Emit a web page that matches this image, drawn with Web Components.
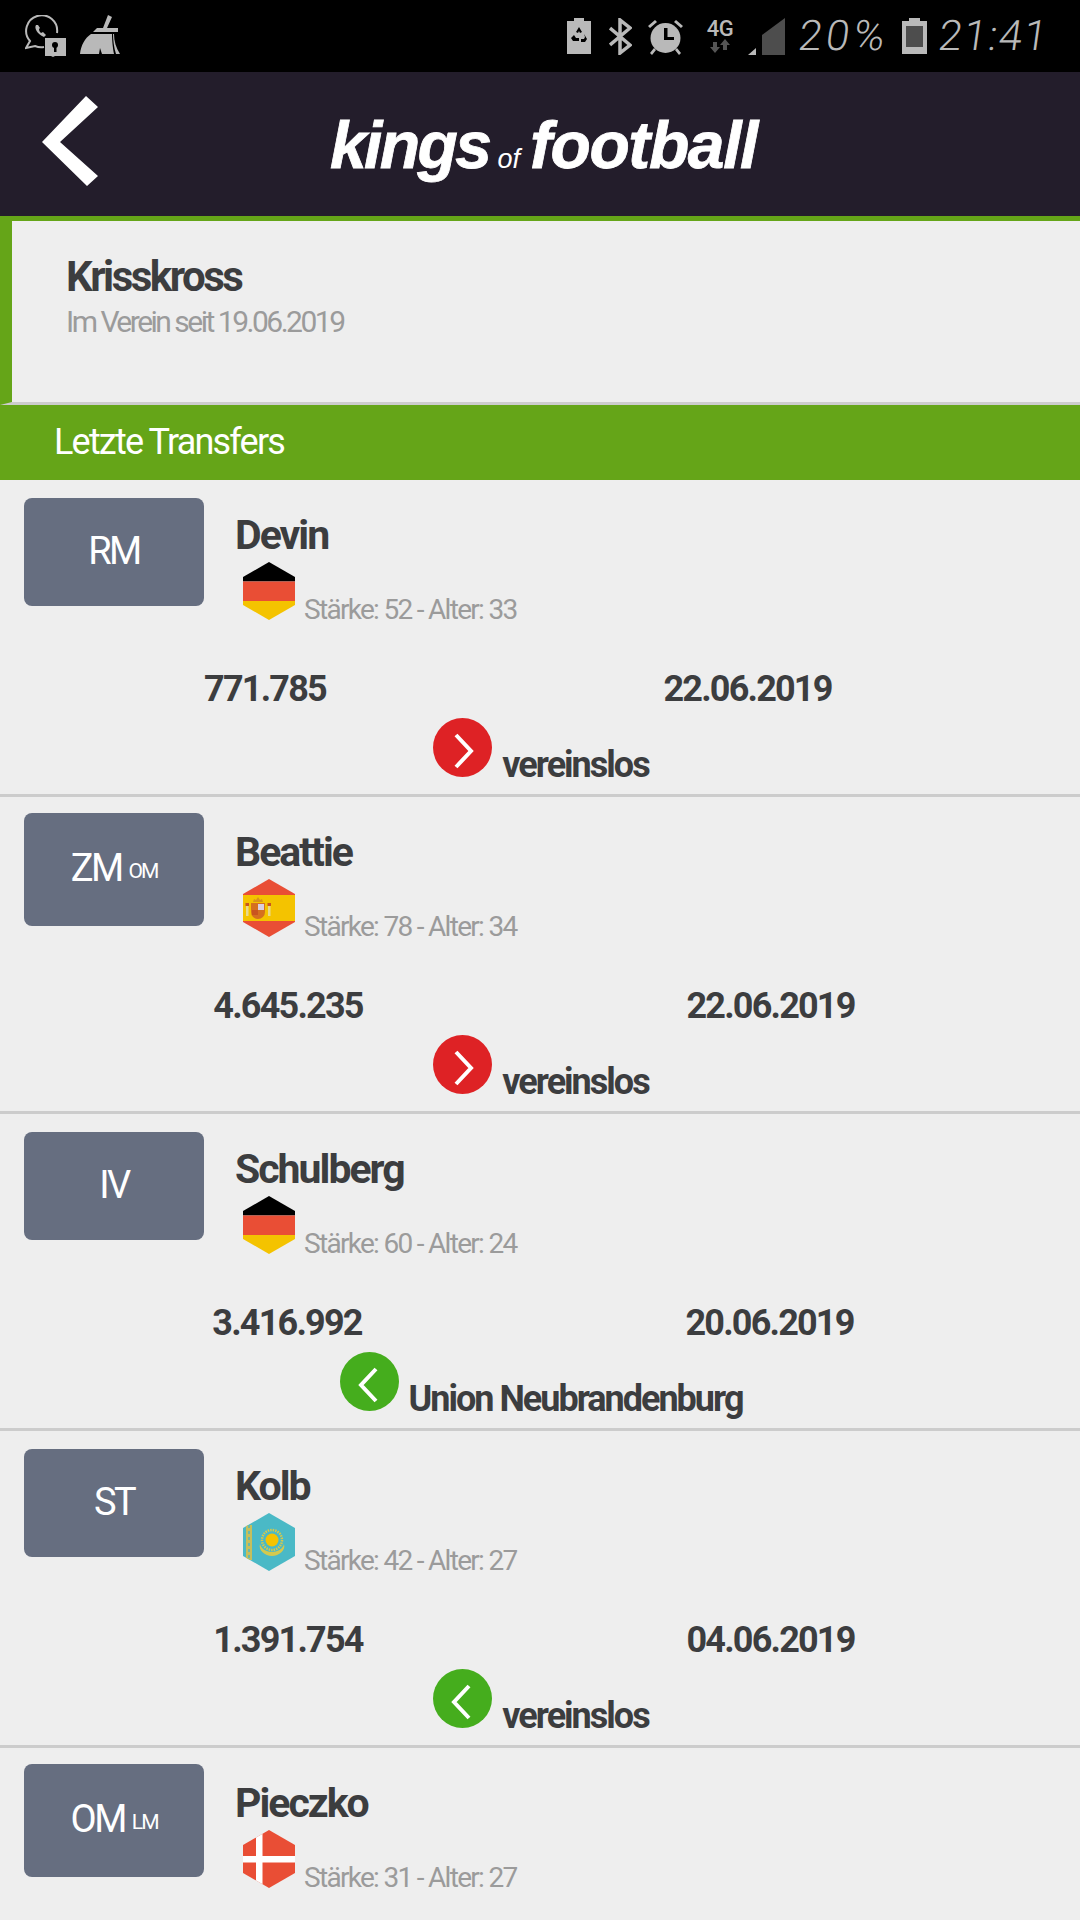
<!DOCTYPE html>
<html lang="de">
<head>
<meta charset="utf-8">
<title>Kings of Football</title>
<style>
  html, body { margin: 0; padding: 0; background: #eee; }
  body { width: 1080px; height: 1920px; overflow: hidden; font-family: Roboto, "Liberation Sans", sans-serif; }
</style>
</head>
<body>
<status-bar></status-bar>
<app-header></app-header>
<club-card name="Krisskross">Im Verein seit 19.06.2019</club-card>
<section-title>Letzte Transfers</section-title>
<transfer-item pos="RM" name="Devin" flag="de" strength="52" age="33" amount="771.785" date="22.06.2019" split="530" dir="out" club="vereinslos"></transfer-item>
<transfer-item pos="ZM" alt="OM" name="Beattie" flag="es" strength="78" age="34" amount="4.645.235" date="22.06.2019" split="576" dir="out" club="vereinslos"></transfer-item>
<transfer-item pos="IV" name="Schulberg" flag="de" strength="60" age="24" amount="3.416.992" date="20.06.2019" split="574" dir="in" club="Union Neubrandenburg"></transfer-item>
<transfer-item pos="ST" name="Kolb" flag="kz" strength="42" age="27" amount="1.391.754" date="04.06.2019" split="576" dir="in" club="vereinslos"></transfer-item>
<transfer-item pos="OM" alt="LM" name="Pieczko" flag="dk" strength="31" age="27" partial></transfer-item>

<script>
const HEX = '26,0 52,15 52,43 26,58 0,43 0,15';

const FLAGS = {
    de: `<rect width="52" height="19.5" fill="#000"/>
         <rect y="19.5" width="52" height="19.5" fill="#e94e35"/>
         <rect y="39" width="52" height="19" fill="#f4c300"/>`,
    es: `<rect width="52" height="58" fill="#e94e35"/>
         <rect y="16" width="52" height="26" fill="#f4c300"/>
         <path d="M8 24h14v9a7 7 0 0 1-14 0z" fill="#d5701f"/>
         <rect x="15" y="25" width="6" height="6" fill="#d9cfe0"/>
         <rect x="9" y="31" width="6" height="5" fill="#c9551f"/>
         <path d="M10 23l1-3 2 1 2-3 2 3 2-1 1 3z" fill="#d9941a"/>
         <rect x="3" y="27" width="2.500" height="10" fill="#e8d98e"/>
         <rect x="25" y="27" width="2.500" height="10" fill="#e8d98e"/>
         <rect x="2.500" y="24" width="3.500" height="3" fill="#c9551f"/>
         <rect x="24.500" y="24" width="3.500" height="3" fill="#c9551f"/>`,
    kz: `<rect width="52" height="58" fill="#4ab9c6"/>
         <rect x="3" y="12" width="6" height="35" fill="#c5bf5c"/>
         <path d="M6 12v35" stroke="#4ab9c6" stroke-width="1.500" stroke-dasharray="3 3"/>
         <circle cx="29" cy="27" r="10" fill="none" stroke="#d4c94e" stroke-width="2.500" stroke-dasharray="1.500 1"/>
         <circle cx="29" cy="27" r="6.500" fill="#f4c300"/>
         <path d="M17 31c-2 6 5 12 12 12s14-6 12-12c-1 5-7 8-12 8s-11-3-12-8z" fill="#d4c94e"/>`,
    dk: `<rect width="52" height="58" fill="#e94e35"/>
         <rect x="13" width="6.500" height="58" fill="#fff"/>
         <rect y="26" width="52" height="6.500" fill="#fff"/>`
};

class StatusBar extends HTMLElement {
    constructor() {
        super();
        this.attachShadow({ mode: 'open' });
        this.shadowRoot.appendChild(StatusBar.template.content.cloneNode(true));
    }
}
StatusBar.template = document.createElement('template');
StatusBar.template.innerHTML = `
<style>
  :host { display: flex; align-items: center; height: 72px; padding: 0 38px 0 25px; box-sizing: border-box;
          background: #000; color: #b9b9b9; }
  svg { display: block; flex: none; }
  .left { display: flex; gap: 14px; }
  .right { display: flex; align-items: center; margin-left: auto; }
  .hand { font: 300 42px/1 Roboto, sans-serif; transform: skewX(-8deg); white-space: nowrap; }
  .pct { margin: 0 14px; width: 89px; letter-spacing: 4px; }
  .time { margin-left: 12px; width: 103px; letter-spacing: 1.500px; }
  .net { display: flex; flex-direction: column; align-items: center; width: 28px; margin-left: 23px; }
  .net span { font: 500 22px/20px Roboto, sans-serif; letter-spacing: -0.500px; }
</style>
<div class="left">
  <svg width="41" height="42" viewBox="0 0 41 42">
    <path d="M32 18A15.500 15.500 0 1 0 5 26L1 33l9-2a16 16 0 0 0 9 1" fill="none" stroke="currentColor" stroke-width="2"/>
    <path d="M11 10c-2 3 1 9 8 12l2-2-3-3-2 1c-1-1-2-2-2-4l1-1-2-3z" fill="currentColor"/>
    <path d="M20 23h21v18H30l-2 1-2-1h-6z" fill="currentColor"/>
    <circle cx="30" cy="30" r="3" fill="#000"/><rect x="29" y="31" width="2.500" height="6" fill="#000"/>
  </svg>
  <svg width="40" height="40" viewBox="0 0 40 40">
    <path d="M28 0l4 2-5 11h11v4H13l4-4h6z" fill="currentColor"/>
    <path d="M11 19h21c0 7 1 15 2 20H22l-2-6-1 6H0c1-9 5-16 11-20z" fill="currentColor"/>
    <path d="M34 19c0 7 2 14 6 20h-4c-2-6-3-14-3-20z" fill="currentColor"/>
  </svg>
</div>
<div class="right">
  <svg width="24" height="36" viewBox="0 0 24 36">
    <path d="M7 0h10v3h7v33H0V3h7z" fill="currentColor"/>
    <path d="M12 9l3 5-2 1-1-2-1 2-2-1zM7 17l2 3h3v3H6l-2-3zM17 16l3 5-2 3h-4v-3h3l1-2z" fill="#000"/>
  </svg>
  <svg style="margin-left:18px" width="23" height="37" viewBox="0 0 23 37">
    <path d="M1 10l20 17-10 8V2l10 8L1 27" fill="none" stroke="currentColor" stroke-width="3.500"/>
  </svg>
  <svg style="margin-left:16px" width="35" height="37" viewBox="0 0 35 37">
    <circle cx="17.500" cy="20" r="15" fill="currentColor"/>
    <path d="M0 8l7-6 2 2-7 6zM35 8l-7-6-2 2 7 6zM2 35l4-5 2 2-4 5zM33 35l-4-5-2 2 4 5z" fill="currentColor"/>
    <path d="M16 10h3.500v9H26v3H16z" fill="#000"/>
  </svg>
  <div class="net">
    <span>4G</span>
    <svg width="22" height="14" viewBox="0 0 22 14"><path d="M6 14L1 8h3V3h4v5h3zM16 0l5 6h-3v5h-4V6h-3z" fill="#555"/></svg>
  </div>
  <svg style="margin-left:14px" width="37" height="37" viewBox="0 0 37 37">
    <path d="M37 0v37H14V17z" fill="#4d4d4d"/>
    <path d="M0 37l8-7v7z" fill="#b9b9b9"/>
  </svg>
  <span class="hand pct">20%</span>
  <svg width="25" height="36" viewBox="0 0 25 36">
    <path d="M7 0h11v3h7v33H0V3h7z" fill="currentColor"/>
    <rect x="4" y="8" width="17" height="21" fill="#4d4d4d"/>
  </svg>
  <span class="hand time">21:41</span>
</div>`;
customElements.define('status-bar', StatusBar);

class AppHeader extends HTMLElement {
    constructor() {
        super();
        this.attachShadow({ mode: 'open' });
        this.shadowRoot.appendChild(AppHeader.template.content.cloneNode(true));
    }
}
AppHeader.template = document.createElement('template');
AppHeader.template.innerHTML = `
<style>
  :host { display: flex; align-items: center; height: 149px; padding-left: 42px; box-sizing: border-box;
          background: #231d2b; border-bottom: 5px solid #65a518; }
  svg { display: block; flex: none; margin-bottom: 6px; }
  .logo { margin: 2px 0 0 232px; color: #fff; white-space: nowrap; font-family: "Liberation Sans", Arial, sans-serif;
          font-style: italic; line-height: 1; -webkit-text-stroke: 0.8px #fff; }
  .big { font-size: 66px; font-weight: 700; letter-spacing: -2.600px; }
  .of { font-size: 27px; margin: 0 10px 0 8px; -webkit-text-stroke: 0; }
  .big.last { letter-spacing: -1.400px; }
</style>
<svg width="56" height="90" viewBox="42 96 56 90"><polygon fill="#fff" points="86,96 98,107 60,142 98,176 87,186 42,142"/></svg>
<div class="logo"><span class="big">kings</span><span class="of">of</span><span class="big last">football</span></div>`;
customElements.define('app-header', AppHeader);

class ClubCard extends HTMLElement {
    constructor() {
        super();
        this.attachShadow({ mode: 'open' });
        this.shadowRoot.appendChild(ClubCard.template.content.cloneNode(true));
        this.shadowRoot.querySelector('.name').textContent = this.getAttribute('name');
    }
}
ClubCard.template = document.createElement('template');
ClubCard.template.innerHTML = `
<style>
  :host { display: block; height: 184px; padding: 33px 0 0 54px; box-sizing: border-box; background: #eee;
          border-left: 12px solid #65a518; border-bottom: 3px solid #ccc; }
  .name { font: 700 42px/46px Roboto, sans-serif; letter-spacing: -2.500px; color: #3c3d3f; }
  .sub { font: 400 30px/36px Roboto, sans-serif; letter-spacing: -2.500px; color: #9b9b9b; margin-top: 4px; }
</style>
<div class="name"></div>
<div class="sub"><slot></slot></div>`;
customElements.define('club-card', ClubCard);

class SectionTitle extends HTMLElement {
    constructor() {
        super();
        this.attachShadow({ mode: 'open' });
        this.shadowRoot.innerHTML = `
<style>
  :host { display: flex; align-items: center; height: 75px; box-sizing: border-box; padding: 0 0 2px 54px;
          background: #65a518; color: #fff; font: 400 36px/1 Roboto, sans-serif; letter-spacing: -1.800px; }
</style>
<slot></slot>`;
    }
}
customElements.define('section-title', SectionTitle);

class TransferItem extends HTMLElement {
    constructor() {
        super();
        this.attachShadow({ mode: 'open' });
        this.shadowRoot.appendChild(TransferItem.template.content.cloneNode(true));
    }

    connectedCallback() {
        const root = this.shadowRoot;
        const attr = name => this.getAttribute(name) || '';
        root.querySelector('.main').textContent = attr('pos');
        root.querySelector('.alt').textContent = attr('alt');
        root.querySelector('.pos').classList.toggle('double', this.hasAttribute('alt'));
        root.querySelector('.name').textContent = attr('name');
        root.querySelector('.stats').textContent = `Stärke: ${attr('strength')} - Alter: ${attr('age')}`;
        root.querySelector('.flag').innerHTML =
            `<defs><clipPath id="hex"><polygon points="${HEX}"/></clipPath></defs>` +
            `<g clip-path="url(#hex)">${FLAGS[attr('flag')]}</g>`;
        if (this.hasAttribute('partial')) {
            // cut off by the bottom of the screen, only the top part shows
            root.querySelector('.figures').remove();
            root.querySelector('.dest').remove();
            return;
        }
        root.querySelector('.amount').textContent = attr('amount');
        root.querySelector('.date').textContent = attr('date');
        root.querySelector('.figures').style.setProperty('--split', attr('split') + 'px');
        root.querySelector('.club').textContent = attr('club');
        const arrow = root.querySelector('.arrow');
        arrow.classList.add(attr('dir'));
        arrow.querySelector('polyline').setAttribute('points',
            attr('dir') === 'out' ? '23,17 38,33 23,49' : '36,17 21,33 36,49');
    }
}
TransferItem.template = document.createElement('template');
TransferItem.template.innerHTML = `
<style>
  :host { display: block; height: 317px; box-sizing: border-box; background: #eee; border-bottom: 3px solid #ccc;
          color: #3c3d3f; font-family: Roboto, sans-serif; }
  :host([partial]) { height: 172px; border-bottom: 0; }
  .top { display: flex; height: 144px; padding-left: 24px; gap: 31px; }
  .pos { align-self: center; display: flex; align-items: center; justify-content: center; gap: 7px;
         width: 180px; height: 108px; box-sizing: border-box; padding-bottom: 2px; border-radius: 8px;
         background: #666e80; color: #fff; }
  .pos.double { height: 113px; }
  .main { font-size: 38px; letter-spacing: -2.500px; }
  .alt { font-size: 21px; letter-spacing: -2px; margin-top: 6px; }
  .alt:empty { display: none; }
  .info { padding-top: 33px; }
  .name { font: 700 41px/44px Roboto, sans-serif; letter-spacing: -2px; }
  .meta { display: flex; align-items: flex-end; gap: 9px; margin: 5px 0 0 8px; }
  .flag { display: block; flex: none; width: 52px; height: 58px; }
  .stats { font: 400 28px/24px Roboto, sans-serif; letter-spacing: -1.700px; color: #9b9b9b; margin-bottom: -2px; }
  .figures { display: grid; grid-template-columns: var(--split) 1fr; width: 965px; margin-top: 42px;
             text-align: center; font: 700 36px/46px Roboto, sans-serif; letter-spacing: -1.800px; }
  .dest { display: flex; justify-content: center; align-items: flex-end; gap: 10px; margin-top: 6px; padding-left: 2px; }
  .arrow { display: block; flex: none; width: 59px; height: 59px; }
  .arrow.out circle { fill: #de2225; }
  .arrow.in circle { fill: #45ad1d; }
  .club { font: 700 36px/40px Roboto, sans-serif; letter-spacing: -2px; margin-bottom: -8px; }
</style>
<div class="top">
  <div class="pos"><span class="main"></span><span class="alt"></span></div>
  <div class="info">
    <div class="name"></div>
    <div class="meta"><svg class="flag" viewBox="0 0 52 58"></svg><span class="stats"></span></div>
  </div>
</div>
<div class="figures"><span class="amount"></span><span class="date"></span></div>
<div class="dest">
  <svg class="arrow" viewBox="0 0 59 59"><circle cx="29.500" cy="29.500" r="29.500"/><polyline points="" fill="none" stroke="#fff" stroke-width="4"/></svg>
  <span class="club"></span>
</div>`;
customElements.define('transfer-item', TransferItem);
</script>
</body>
</html>
